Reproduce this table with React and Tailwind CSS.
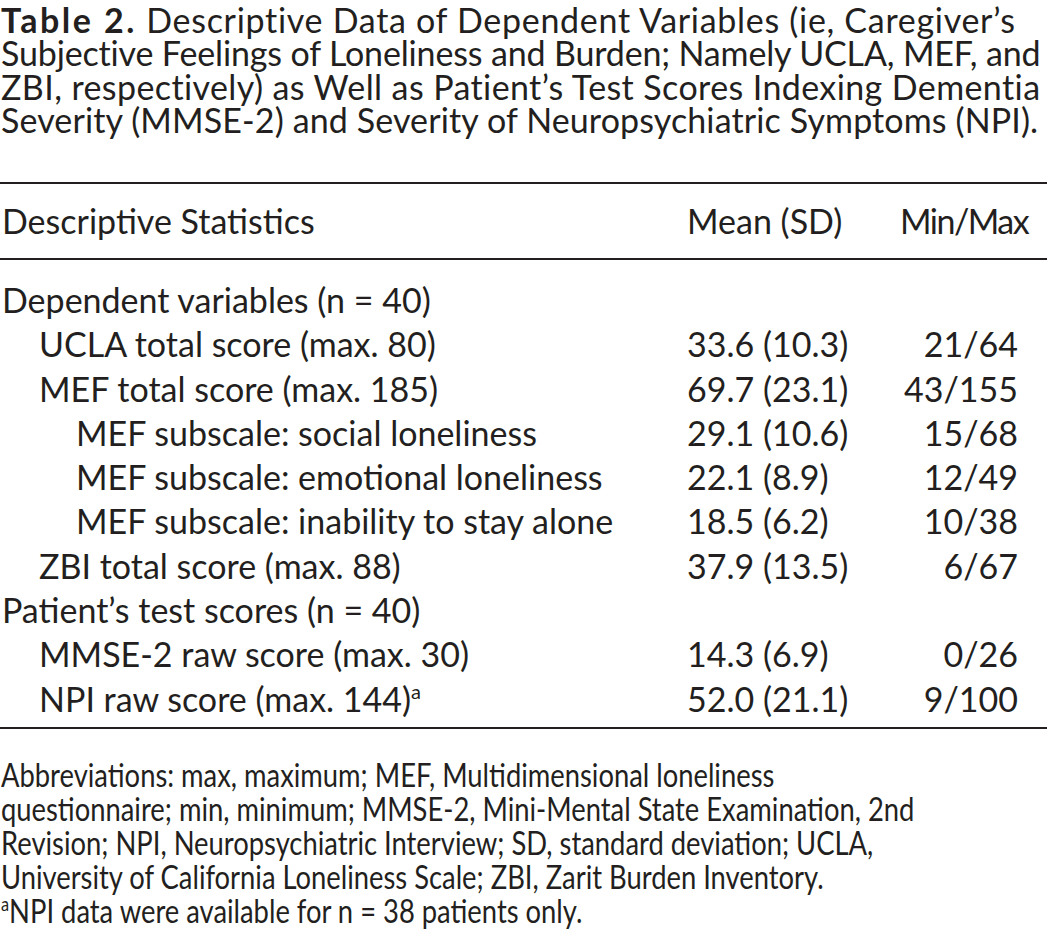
import React from "react";

const rows = [
  { label: "Dependent variables (n = 40)", indent: 0, mean: "", mm: "" },
  { label: "UCLA total score (max. 80)", indent: 1, mean: "33.6 (10.3)", mm: "21/64" },
  { label: "MEF total score (max. 185)", indent: 1, mean: "69.7 (23.1)", mm: "43/155" },
  { label: "MEF subscale: social loneliness", indent: 2, mean: "29.1 (10.6)", mm: "15/68" },
  { label: "MEF subscale: emotional loneliness", indent: 2, mean: "22.1 (8.9)", mm: "12/49" },
  { label: "MEF subscale: inability to stay alone", indent: 2, mean: "18.5 (6.2)", mm: "10/38" },
  { label: "ZBI total score (max. 88)", indent: 1, mean: "37.9 (13.5)", mm: "6/67" },
  { label: "Patient\u2019s test scores (n = 40)", indent: 0, mean: "", mm: "" },
  { label: "MMSE-2 raw score (max. 30)", indent: 1, mean: "14.3 (6.9)", mm: "0/26" },
  { label: "NPI raw score (max. 144)", indent: 1, mean: "52.0 (21.1)", mm: "9/100", sup: "a" },
];

const indentClass = ["pl-[2px]", "pl-[39px]", "pl-[76px]"];

export default function App() {
  return (
    <div className="w-[1047px] min-h-[945px] bg-white text-[#231f20] font-['Lato',_'Open_Sans',_sans-serif]">
      {/* Title */}
      <div className="pt-[3px] text-[34px] leading-[33.33px] pl-[1px]">
        <div className="whitespace-nowrap">
          <span className="font-bold tracking-[2.5px]">Table 2.</span>
          <span className="tracking-[0.7px]"> Descriptive Data of Dependent Variables (ie, Caregiver’s</span>
        </div>
        <div className="whitespace-nowrap tracking-[-0.15px]">Subjective Feelings of Loneliness and Burden; Namely UCLA, MEF, and</div>
        <div className="whitespace-nowrap tracking-[0.4px]">ZBI, respectively) as Well as Patient’s Test Scores Indexing Dementia</div>
        <div className="whitespace-nowrap tracking-[0.12px]">Severity (MMSE-2) and Severity of Neuropsychiatric Symptoms (NPI).</div>
      </div>

      <div className="mt-[46px] h-[2px] bg-[#231f20]" />

      {/* Header */}
      <div className="grid grid-cols-[1fr_213px_147px] pt-[16px] pb-[15px] text-[34px] leading-[42.67px]">
        <div className="pl-[2px] whitespace-nowrap">Descriptive Statistics</div>
        <div className="whitespace-nowrap">Mean (SD)</div>
        <div className="text-right whitespace-nowrap pr-[20px] tracking-[-1.5px]">Min/Max</div>
      </div>

      <div className="h-[2px] bg-[#231f20]" />

      {/* Body */}
      <div className="pt-[18px] pb-[6px] text-[34px] leading-[44.3px]">
        {rows.map((r, i) => (
          <div key={i} className="grid grid-cols-[1fr_213px_147px]">
            <div className={`${indentClass[r.indent]} whitespace-nowrap`}>
              {r.label}
              {r.sup && <span className="relative -top-[13px] text-[20px] leading-none">{r.sup}</span>}
            </div>
            <div className="whitespace-nowrap">{r.mean}</div>
            <div className="text-right whitespace-nowrap pr-[29px]">{r.mm}</div>
          </div>
        ))}
      </div>

      <div className="h-[2px] bg-[#231f20]" />

      {/* Footnotes */}
      <div className="pt-[29px] text-[32px] leading-[34px] pl-[1px]">
        <div className="origin-left scale-x-[0.855] whitespace-nowrap">Abbreviations: max, maximum; MEF, Multidimensional loneliness</div>
        <div className="origin-left scale-x-[0.855] whitespace-nowrap">questionnaire; min, minimum; MMSE-2, Mini-Mental State Examination, 2nd</div>
        <div className="origin-left scale-x-[0.855] whitespace-nowrap">Revision; NPI, Neuropsychiatric Interview; SD, standard deviation; UCLA,</div>
        <div className="origin-left scale-x-[0.855] whitespace-nowrap">University of California Loneliness Scale; ZBI, Zarit Burden Inventory.</div>
        <div className="origin-left scale-x-[0.855] whitespace-nowrap">
          <span className="relative -top-[12px] text-[19px] leading-none">a</span>NPI data were available for n = 38 patients only.
        </div>
      </div>
    </div>
  );
}
